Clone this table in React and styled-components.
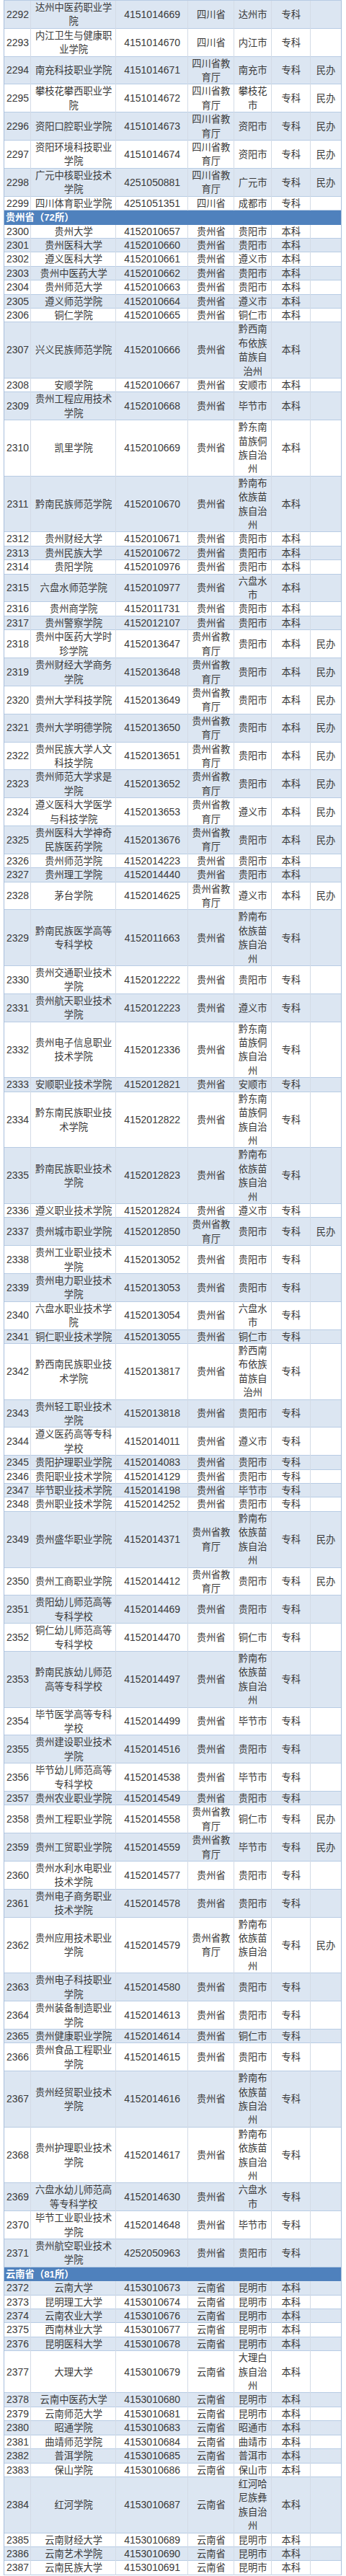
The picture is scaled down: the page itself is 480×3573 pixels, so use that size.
import React from "react";
import styled, { createGlobalStyle } from "styled-components";

const GlobalStyle = createGlobalStyle`
  html, body {
    margin: 0;
    padding: 0;
    background: #fff;
  }
`;

// 序号|院校名称|代码|主管部门|所在地|层次|备注
const sections = [
  {
    title: null,
    shadeEven: true,
    rows: `2292|达州中医药职业学院|4151014669|四川省|达州市|专科|
2293|内江卫生与健康职业学院|4151014670|四川省|内江市|专科|
2294|南充科技职业学院|4151014671|四川省教育厅|南充市|专科|民办
2295|攀枝花攀西职业学院|4151014672|四川省教育厅|攀枝花市|专科|民办
2296|资阳口腔职业学院|4151014673|四川省教育厅|资阳市|专科|民办
2297|资阳环境科技职业学院|4151014674|四川省教育厅|资阳市|专科|民办
2298|广元中核职业技术学院|4251050881|四川省教育厅|广元市|专科|民办
2299|四川体育职业学院|4251051351|四川省|成都市|专科|`,
  },
  {
    title: "贵州省（72所）",
    shadeEven: false,
    rows: `2300|贵州大学|4152010657|贵州省|贵阳市|本科|
2301|贵州医科大学|4152010660|贵州省|贵阳市|本科|
2302|遵义医科大学|4152010661|贵州省|遵义市|本科|
2303|贵州中医药大学|4152010662|贵州省|贵阳市|本科|
2304|贵州师范大学|4152010663|贵州省|贵阳市|本科|
2305|遵义师范学院|4152010664|贵州省|遵义市|本科|
2306|铜仁学院|4152010665|贵州省|铜仁市|本科|
2307|兴义民族师范学院|4152010666|贵州省|黔西南布依族苗族自治州|本科|
2308|安顺学院|4152010667|贵州省|安顺市|本科|
2309|贵州工程应用技术学院|4152010668|贵州省|毕节市|本科|
2310|凯里学院|4152010669|贵州省|黔东南苗族侗族自治州|本科|
2311|黔南民族师范学院|4152010670|贵州省|黔南布依族苗族自治州|本科|
2312|贵州财经大学|4152010671|贵州省|贵阳市|本科|
2313|贵州民族大学|4152010672|贵州省|贵阳市|本科|
2314|贵阳学院|4152010976|贵州省|贵阳市|本科|
2315|六盘水师范学院|4152010977|贵州省|六盘水市|本科|
2316|贵州商学院|4152011731|贵州省|贵阳市|本科|
2317|贵州警察学院|4152012107|贵州省|贵阳市|本科|
2318|贵州中医药大学时珍学院|4152013647|贵州省教育厅|贵阳市|本科|民办
2319|贵州财经大学商务学院|4152013648|贵州省教育厅|贵阳市|本科|民办
2320|贵州大学科技学院|4152013649|贵州省教育厅|贵阳市|本科|民办
2321|贵州大学明德学院|4152013650|贵州省教育厅|贵阳市|本科|民办
2322|贵州民族大学人文科技学院|4152013651|贵州省教育厅|贵阳市|本科|民办
2323|贵州师范大学求是学院|4152013652|贵州省教育厅|贵阳市|本科|民办
2324|遵义医科大学医学与科技学院|4152013653|贵州省教育厅|遵义市|本科|民办
2325|贵州医科大学神奇民族医药学院|4152013676|贵州省教育厅|贵阳市|本科|民办
2326|贵州师范学院|4152014223|贵州省|贵阳市|本科|
2327|贵州理工学院|4152014440|贵州省|贵阳市|本科|
2328|茅台学院|4152014625|贵州省教育厅|遵义市|本科|民办
2329|黔南民族医学高等专科学校|4152011663|贵州省|黔南布依族苗族自治州|专科|
2330|贵州交通职业技术学院|4152012222|贵州省|贵阳市|专科|
2331|贵州航天职业技术学院|4152012223|贵州省|遵义市|专科|
2332|贵州电子信息职业技术学院|4152012336|贵州省|黔东南苗族侗族自治州|专科|
2333|安顺职业技术学院|4152012821|贵州省|安顺市|专科|
2334|黔东南民族职业技术学院|4152012822|贵州省|黔东南苗族侗族自治州|专科|
2335|黔南民族职业技术学院|4152012823|贵州省|黔南布依族苗族自治州|专科|
2336|遵义职业技术学院|4152012824|贵州省|遵义市|专科|
2337|贵州城市职业学院|4152012850|贵州省教育厅|贵阳市|专科|民办
2338|贵州工业职业技术学院|4152013052|贵州省|贵阳市|专科|
2339|贵州电力职业技术学院|4152013053|贵州省|贵阳市|专科|
2340|六盘水职业技术学院|4152013054|贵州省|六盘水市|专科|
2341|铜仁职业技术学院|4152013055|贵州省|铜仁市|专科|
2342|黔西南民族职业技术学院|4152013817|贵州省|黔西南布依族苗族自治州|专科|
2343|贵州轻工职业技术学院|4152013818|贵州省|贵阳市|专科|
2344|遵义医药高等专科学校|4152014011|贵州省|遵义市|专科|
2345|贵阳护理职业学院|4152014083|贵州省|贵阳市|专科|
2346|贵阳职业技术学院|4152014129|贵州省|贵阳市|专科|
2347|毕节职业技术学院|4152014198|贵州省|毕节市|专科|
2348|贵州职业技术学院|4152014252|贵州省|贵阳市|专科|
2349|贵州盛华职业学院|4152014371|贵州省教育厅|黔南布依族苗族自治州|专科|民办
2350|贵州工商职业学院|4152014412|贵州省教育厅|贵阳市|专科|民办
2351|贵阳幼儿师范高等专科学校|4152014469|贵州省|贵阳市|专科|
2352|铜仁幼儿师范高等专科学校|4152014470|贵州省|铜仁市|专科|
2353|黔南民族幼儿师范高等专科学校|4152014497|贵州省|黔南布依族苗族自治州|专科|
2354|毕节医学高等专科学校|4152014499|贵州省|毕节市|专科|
2355|贵州建设职业技术学院|4152014516|贵州省|贵阳市|专科|
2356|毕节幼儿师范高等专科学校|4152014538|贵州省|毕节市|专科|
2357|贵州农业职业学院|4152014549|贵州省|贵阳市|专科|
2358|贵州工程职业学院|4152014558|贵州省教育厅|铜仁市|专科|民办
2359|贵州工贸职业学院|4152014559|贵州省教育厅|毕节市|专科|民办
2360|贵州水利水电职业技术学院|4152014577|贵州省|贵阳市|专科|
2361|贵州电子商务职业技术学院|4152014578|贵州省|贵阳市|专科|
2362|贵州应用技术职业学院|4152014579|贵州省教育厅|黔南布依族苗族自治州|专科|民办
2363|贵州电子科技职业学院|4152014580|贵州省|贵阳市|专科|
2364|贵州装备制造职业学院|4152014613|贵州省|贵阳市|专科|
2365|贵州健康职业学院|4152014614|贵州省|铜仁市|专科|
2366|贵州食品工程职业学院|4152014615|贵州省|贵阳市|专科|
2367|贵州经贸职业技术学院|4152014616|贵州省|黔南布依族苗族自治州|专科|
2368|贵州护理职业技术学院|4152014617|贵州省|黔南布依族苗族自治州|专科|
2369|六盘水幼儿师范高等专科学校|4152014630|贵州省|六盘水市|专科|
2370|毕节工业职业技术学院|4152014648|贵州省|毕节市|专科|
2371|贵州航空职业技术学院|4252050963|贵州省|贵阳市|专科|`,
  },
  {
    title: "云南省（81所）",
    shadeEven: true,
    rows: `2372|云南大学|4153010673|云南省|昆明市|本科|
2373|昆明理工大学|4153010674|云南省|昆明市|本科|
2374|云南农业大学|4153010676|云南省|昆明市|本科|
2375|西南林业大学|4153010677|云南省|昆明市|本科|
2376|昆明医科大学|4153010678|云南省|昆明市|本科|
2377|大理大学|4153010679|云南省|大理白族自治州|本科|
2378|云南中医药大学|4153010680|云南省|昆明市|本科|
2379|云南师范大学|4153010681|云南省|昆明市|本科|
2380|昭通学院|4153010683|云南省|昭通市|本科|
2381|曲靖师范学院|4153010684|云南省|曲靖市|本科|
2382|普洱学院|4153010685|云南省|普洱市|本科|
2383|保山学院|4153010686|云南省|保山市|本科|
2384|红河学院|4153010687|云南省|红河哈尼族彝族自治州|本科|
2385|云南财经大学|4153010689|云南省|昆明市|本科|
2386|云南艺术学院|4153010690|云南省|昆明市|本科|
2387|云南民族大学|4153010691|云南省|昆明市|本科|`,
  },
];

const App = () => {
  return (
    <>
      <GlobalStyle />
      <Table>
        {sections.map((sec, si) => (
          <React.Fragment key={si}>
            {sec.title && <SectionHeader>{sec.title}</SectionHeader>}
            {sec.rows.split("\n").map((line) => {
              const [num, name, code, dept, city, level, note] = line.split("|");
              const even = Number(num) % 2 === 0;
              return (
                <Row key={num} $shaded={sec.shadeEven ? even : !even}>
                  <NumCell>{num}</NumCell>
                  <Cell>{name}</Cell>
                  <NumCell>{code}</NumCell>
                  <Cell>{dept}</Cell>
                  <Cell>{city}</Cell>
                  <Cell>{level}</Cell>
                  <Cell>{note}</Cell>
                </Row>
              );
            })}
          </React.Fragment>
        ))}
      </Table>
    </>
  );
};

export default App;

const LINE = "19.41px";

const Table = styled.div`
  width: 469.3px;
  margin-left: 5px;
  box-sizing: border-box;
  border-top: 1px solid #b8cce4;
  border-left: 1px solid #a9bfdc;
  border-right: 1px solid #a9bfdc;
  font-family: "Liberation Sans", "Noto Sans CJK SC", sans-serif;
  color: #3a3a3a;
`;

const SectionHeader = styled.div`
  background: #4f81bd;
  color: #fff;
  font-weight: bold;
  font-size: 13.3px;
  line-height: ${LINE};
  padding-left: 2px;
`;

const Row = styled.div`
  display: grid;
  grid-template-columns: 37px 118.3px 99.7px 63.7px 52px 54px 1fr;
  background: ${(p) => (p.$shaded ? "#dce6f2" : "#ffffff")};
  box-shadow: inset 0 -1px #b8cce4;
`;

const Cell = styled.div`
  display: flex;
  align-items: center;
  justify-content: center;
  text-align: center;
  font-size: 13.3px;
  line-height: ${LINE};
  box-shadow: inset -1px 0 #d3dbe6;

  &:last-child {
    box-shadow: none;
  }
`;

const NumCell = styled(Cell)`
  font-size: 14px;
`;
